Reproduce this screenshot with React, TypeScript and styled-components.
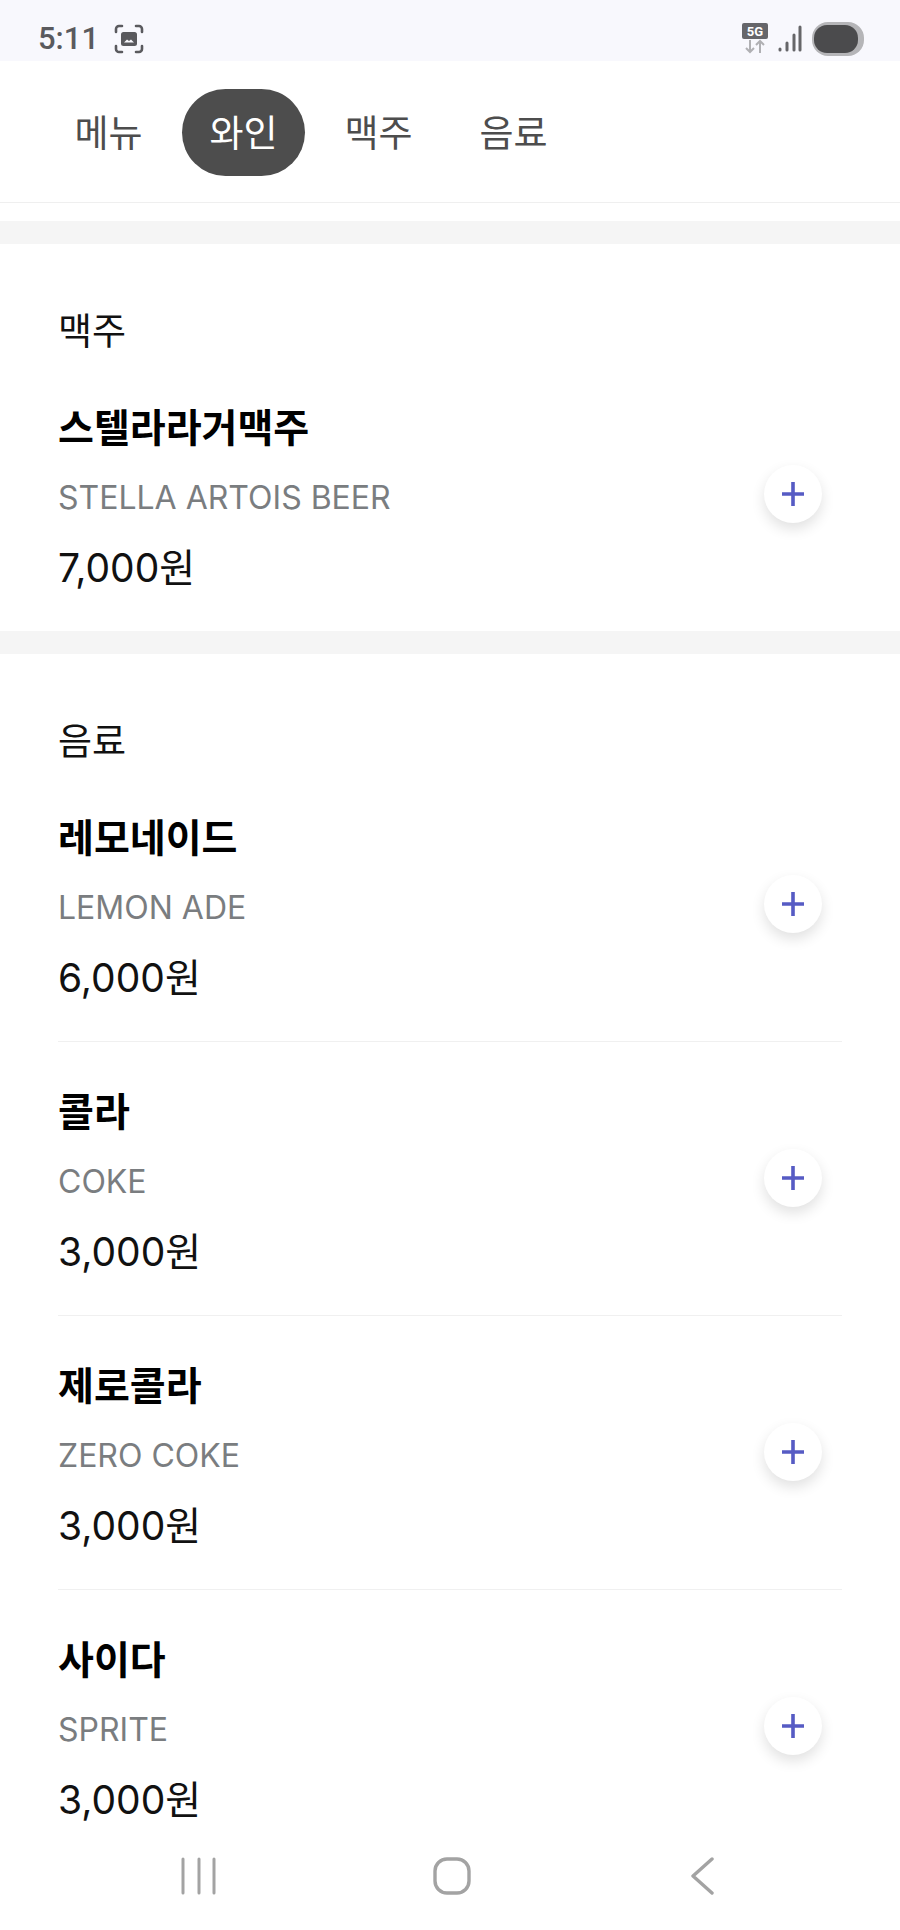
import styled, { createGlobalStyle } from 'styled-components'

const GlobalStyle = createGlobalStyle`
  html, body {
    margin: 0;
    padding: 0;
    background: #ffffff;
  }
  * {
    box-sizing: border-box;
  }
`

type MenuItem = { name: string; english: string; price: string }

const beers: MenuItem[] = [{ name: '스텔라라거맥주', english: 'STELLA ARTOIS BEER', price: '7,000원' }]

const drinks: MenuItem[] = [
  { name: '레모네이드', english: 'LEMON ADE', price: '6,000원' },
  { name: '콜라', english: 'COKE', price: '3,000원' },
  { name: '제로콜라', english: 'ZERO COKE', price: '3,000원' },
  { name: '사이다', english: 'SPRITE', price: '3,000원' },
]

const tabs = ['메뉴', '와인', '맥주', '음료']

const Screen = styled.div`
  width: 900px;
  height: 1930px;
  display: flex;
  flex-direction: column;
  overflow: hidden;
  background: #ffffff;
  font-family: Inter, 'Noto Sans CJK KR', sans-serif;
`

const StatusBar = styled.div`
  height: 61px;
  flex: none;
  display: flex;
  align-items: center;
  justify-content: space-between;
  padding: 16px 35px 0 38px;
  background: #f8f8fd;
  color: #5a5a5e;
`

const StatusGroup = styled.div`
  display: flex;
  align-items: center;
`

const Clock = styled.span`
  font-family: Roboto, sans-serif;
  font-size: 31px;
  font-weight: 500;
  margin-right: 15px;
`

const TabBar = styled.nav`
  height: 142px;
  flex: none;
  display: flex;
  gap: 12px;
  padding: 28px 47px 0;
  border-bottom: 1px solid #efefef;
`

const Tab = styled.div<{ $active?: boolean }>`
  width: 123px;
  height: 87px;
  display: flex;
  align-items: center;
  justify-content: center;
  padding-bottom: 3px;
  border-radius: 44px;
  font-size: 37px;
  color: ${({ $active }) => ($active ? '#ffffff' : '#4d4d4d')};
  background: ${({ $active }) => ($active ? '#4d4d4d' : 'transparent')};
`

const Content = styled.main`
  flex: 1;
  min-height: 0;
  overflow: hidden;
  padding-top: 18px;
`

const Band = styled.div`
  height: 23px;
  background: #f5f5f5;
`

const Section = styled.section`
  padding: 65px 58px 0;
`

const SectionTitle = styled.h2`
  margin: 0 0 3px;
  font-size: 37px;
  font-weight: 400;
  line-height: 46px;
  color: #111111;
`

const Item = styled.div<{ $last?: boolean }>`
  display: flex;
  align-items: center;
  justify-content: space-between;
  padding: 45px 20px 37px 0;
  border-bottom: ${({ $last }) => ($last ? 'none' : '1px solid #f0f0f0')};
`

const ItemText = styled.div`
  display: flex;
  flex-direction: column;
`

const ItemName = styled.div`
  font-size: 39px;
  font-weight: 700;
  line-height: 50px;
  color: #000000;
`

const ItemEnglish = styled.div`
  margin-top: 22px;
  font-size: 32px;
  line-height: 46px;
  color: #7a7d80;
`

const ItemPrice = styled.div`
  margin-top: 21px;
  font-size: 39px;
  line-height: 52px;
  color: #111111;
`

const AddButton = styled.button`
  width: 58px;
  height: 58px;
  flex: none;
  display: flex;
  align-items: center;
  justify-content: center;
  padding: 0;
  margin-bottom: 10px;
  border: none;
  border-radius: 50%;
  background: #ffffff;
  box-shadow: 0 6px 14px rgba(0, 0, 0, 0.12);
`

const BottomNav = styled.div`
  height: 100px;
  flex: none;
  display: flex;
  align-items: flex-start;
  justify-content: space-between;
  padding: 27px 186px 0 180px;
  background: #ffffff;
`

const HomeSlot = styled.div`
  display: flex;
  margin-left: -4px;
`

const NetworkSlot = styled.div`
  display: flex;
  margin-right: 9px;
`

const SignalSlot = styled.div`
  display: flex;
  margin-right: 9px;
`

const Plus = () => (
  <svg width="24" height="26" viewBox="0 0 24 26" fill="none" stroke="#565bc4" strokeWidth="3.6">
    <path d="M12 1v24M1 13h22" />
  </svg>
)

const CaptureIcon = () => (
  <svg width="30" height="30" viewBox="0 0 30 30" fill="none" stroke="#5a5a5e" strokeWidth="2.6" strokeLinecap="round">
    <path d="M2 8V5a3 3 0 0 1 3-3h3M22 2h3a3 3 0 0 1 3 3v3M28 22v3a3 3 0 0 1-3 3h-3M8 28H5a3 3 0 0 1-3-3v-3" />
    <rect x="7" y="8" width="16" height="14" rx="2.5" fill="#5a5a5e" stroke="none" />
    <path d="M10 18.5l3-3 2 1.5 2-1.5 3 3z" fill="#f8f8fd" stroke="none" />
  </svg>
)

const NetworkIcon = () => (
  <svg width="28" height="32" viewBox="0 0 28 32">
    <rect x="1" y="0" width="26" height="16" rx="2" fill="#66666a" />
    <text x="14" y="13" textAnchor="middle" fontFamily="Roboto, sans-serif" fontSize="13" fontWeight="700" fill="#ffffff">
      5G
    </text>
    <path d="M9 17v12M5 25l4 4 4-4M19 30V18M15 22l4-4 4 4" fill="none" stroke="#b0b0b3" strokeWidth="2" />
  </svg>
)

const SignalIcon = () => (
  <svg width="24" height="30" viewBox="0 0 24 30" stroke="#666669" strokeWidth="3" strokeLinecap="round">
    <path d="M2 26v-1M9 26v-7M16 26V11M22 26V3" />
  </svg>
)

const BatteryIcon = () => (
  <svg width="54" height="36" viewBox="0 0 54 36">
    <rect x="1" y="1" width="52" height="34" rx="16" fill="#b5b5b8" />
    <rect x="3" y="4" width="44" height="28" rx="13" fill="#4b4b4d" />
  </svg>
)

const RecentsIcon = () => (
  <svg width="38" height="38" viewBox="0 0 38 38" stroke="#a3a3a3" strokeWidth="3" strokeLinecap="round">
    <path d="M3 2v34M19 2v34M34 2v34" />
  </svg>
)

const HomeIcon = () => (
  <svg width="38" height="38" viewBox="0 0 38 38" fill="none" stroke="#a3a3a3" strokeWidth="3.4">
    <rect x="2" y="2" width="34" height="34" rx="12" />
  </svg>
)

const BackIcon = () => (
  <svg width="24" height="38" viewBox="0 0 24 38" fill="none" stroke="#a3a3a3" strokeWidth="3.4" strokeLinecap="round" strokeLinejoin="round">
    <path d="M22 2L3 19l19 17" />
  </svg>
)

const MenuSection = ({ title, items }: { title: string; items: MenuItem[] }) => (
  <Section>
    <SectionTitle>{title}</SectionTitle>
    {items.map((item, i) => (
      <Item key={item.name} $last={i === items.length - 1}>
        <ItemText>
          <ItemName>{item.name}</ItemName>
          <ItemEnglish>{item.english}</ItemEnglish>
          <ItemPrice>{item.price}</ItemPrice>
        </ItemText>
        <AddButton>
          <Plus />
        </AddButton>
      </Item>
    ))}
  </Section>
)

const App = () => {
  return (
    <Screen>
      <GlobalStyle />
      <StatusBar>
        <StatusGroup>
          <Clock>5:11</Clock>
          <CaptureIcon />
        </StatusGroup>
        <StatusGroup>
          <NetworkSlot>
            <NetworkIcon />
          </NetworkSlot>
          <SignalSlot>
            <SignalIcon />
          </SignalSlot>
          <BatteryIcon />
        </StatusGroup>
      </StatusBar>
      <TabBar>
        {tabs.map((tab) => (
          <Tab key={tab} $active={tab === '와인'}>
            {tab}
          </Tab>
        ))}
      </TabBar>
      <Content>
        <Band />
        <MenuSection title="맥주" items={beers} />
        <Band />
        <MenuSection title="음료" items={drinks} />
      </Content>
      <BottomNav>
        <RecentsIcon />
        <HomeSlot>
          <HomeIcon />
        </HomeSlot>
        <BackIcon />
      </BottomNav>
    </Screen>
  )
}

export default App
